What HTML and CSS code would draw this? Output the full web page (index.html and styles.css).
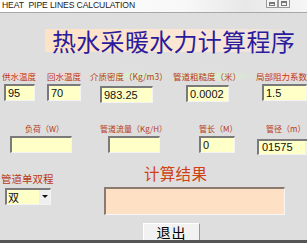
FILE: index.html
```html
<!DOCTYPE html>
<html>
<head>
<meta charset="utf-8">
<link rel="stylesheet" href="styles.css">
</head>
<body>
<div class="win">
  <div class="titlebar">
    <span class="tb-text">HEAT&nbsp; PIPE LINES CALCULATION</span>
    <span class="tb-btns"><span class="tb-btn"><span class="ic-min"></span></span><span class="tb-btn"><span class="ic-max"></span></span></span>
  </div>
  <div class="client">
    <div class="heading"><span class="heading-text">热水采暖水力计算程序</span></div>

    <div class="row row1">
      <div class="fld f11"><div class="lbl lp">供水温度</div><div class="inp">95</div></div>
      <div class="fld f12"><div class="lbl lp">回水温度</div><div class="inp">70</div></div>
      <div class="fld f13"><div class="lbl lg">介质密度（Kg/m3）</div><div class="inp">983.25</div></div>
      <div class="fld f14"><div class="lbl lg">管道粗糙度（米）</div><div class="inp">0.0002</div></div>
      <div class="fld f15"><div class="lbl lp">局部阻力系数</div><div class="inp">1.5</div></div>
    </div>

    <div class="row row2">
      <div class="fld f21"><div class="lbl">负荷（W）</div><div class="inp"></div></div>
      <div class="fld f22"><div class="lbl">管道流量（Kg/H）</div><div class="inp"></div></div>
      <div class="fld f23"><div class="lbl">管长（M）</div><div class="inp">0</div></div>
      <div class="fld f24"><div class="lbl">管径（m）</div><div class="sel wide"><span class="sel-v">01575</span><span class="arrow"></span></div></div>
    </div>

    <div class="row row3">
      <div class="col-left">
        <div class="lbl big">管道单双程</div>
        <div class="sel small"><span class="sel-v">双</span><span class="arrow"></span></div>
      </div>
      <div class="col-right">
        <div class="result-title">计算结果</div>
        <div class="result"></div>
      </div>
    </div>

    <div class="btnrow"><div class="btn">退出</div></div>
  </div>
</div>
</body>
</html>
```

FILE: styles.css
```css
* { box-sizing: border-box; }
html, body { margin: 0; padding: 0; }
body {
  width: 307px;
  height: 243px;
  overflow: hidden;
  background: #dedede;
  font-family: "Noto Sans CJK SC", "Liberation Sans", sans-serif;
}
.win { width: 307px; height: 243px; display: flex; flex-direction: column; }
.titlebar {
  height: 15px;
  background: linear-gradient(to right, #ffffff 0%, #f8f8f8 60%, #e8e8e8 80%, #f6f6f6 100%);
  border-bottom: 1px solid #a8a8a8;
  display: flex;
  align-items: flex-start;
  justify-content: space-between;
  padding-left: 2px;
}
.tb-text {
  font-family: "Liberation Sans", Arial, sans-serif;
  font-size: 8.6px;
  line-height: 10px;
  color: #222;
  letter-spacing: -0.1px;
}
.tb-btns { display: flex; margin-right: 17px; }
.tb-btn {
  width: 12px; height: 8px;
  border: 1px solid #9a9a9a;
  border-top: none;
  background: #f4f4f4;
  display: flex;
  align-items: center;
  justify-content: center;
}
.ic-min { width: 6px; height: 4px; border: 1px solid #777; border-top-width: 2px; }
.ic-max { width: 6px; height: 5px; border: 1px solid #777; border-top-width: 2px; }
.client {
  flex: 1;
  border-bottom: 3px solid #555;
  display: flex;
  flex-direction: column;
}
.heading {
  margin: 16px 0 0 45px;
  width: 246px;
  height: 23px;
  background: linear-gradient(to right, #fde3c6 0%, #fbe6d2 50%, #f2e4dc 85%, #dedede 100%);
  display: flex;
  align-items: center;
}
.heading-text {
  font-size: 24px;
  line-height: 23px;
  color: #2a1c9c;
  letter-spacing: 0.3px;
  margin-left: 7px;
  white-space: nowrap;
}
.row { display: flex; align-items: flex-start; }
.row1 { margin-top: 19px; }
.fld { display: flex; flex-direction: column; }
.lbl {
  font-size: 8.5px;
  line-height: 10px;
  color: #b83a14;
  white-space: nowrap;
}
.lp { background: radial-gradient(ellipse at center, #fcd3cf 0%, rgba(222,222,222,0) 75%); }
.lg { background: radial-gradient(ellipse at center, #d8f0cc 0%, rgba(222,222,222,0) 75%); }
.inp {
  height: 17px;
  background: #ffffc8;
  border-top: 2px solid #7a7a7a;
  border-left: 2px solid #7a7a7a;
  border-right: 1px solid #f4f4f4;
  border-bottom: 1px solid #f4f4f4;
  font-family: "Liberation Sans", Arial, sans-serif;
  font-size: 11px;
  line-height: 14px;
  padding-left: 2px;
  color: #111;
}
.f11 { margin-left: 2px; width: 40px; }
.f11 .inp { margin: 3px 0 0 2px; width: 31px; }
.f12 { margin-left: 5px; width: 40px; }
.f12 .inp { margin: 3px 0 0 0; width: 34px; }
.f13 { margin-left: 3px; width: 80px; }
.f13 .inp { margin: 5px 0 0 10px; width: 53px; }
.f14 { margin-left: 3px; width: 83px; }
.f14 .inp { margin: 4px 0 0 13px; width: 43px; }
.f15 { margin-left: 0px; width: 51px; }
.f15 .inp { margin: 3px 0 0 6px; width: 45px; }

.row2 { margin-top: 21px; }
.row2 .lbl { font-size: 8px; }
.f21 { margin-left: 10px; width: 90px; }
.f21 .lbl { margin-left: 15px; }
.f21 .inp { margin-top: 2px; width: 62px; }
.f22 { margin-left: 0; width: 99px; }
.f22 .inp { margin: 2px 0 0 8px; width: 52px; }
.f23 { width: 58px; }
.f23 .inp { margin-top: 2px; width: 36px; padding-top: 0; }
.f23 .lbl { margin-left: 0; }
.f24 { width: 50px; }
.f24 .lbl { margin-left: 9px; }

.sel {
  display: flex;
  background: #ffffff;
  border-top: 2px solid #7a7a7a;
  border-left: 2px solid #7a7a7a;
  border-right: 1px solid #f4f4f4;
  border-bottom: 1px solid #f4f4f4;
}
.sel-v {
  flex: 1;
  background: #ffffc8;
  font-family: "Liberation Sans", Arial, sans-serif;
  font-size: 11px;
  line-height: 13px;
  padding-left: 3px;
  color: #111;
}
.arrow {
  width: 11px;
  background: #efefef;
  position: relative;
}
.arrow::after {
  content: "";
  position: absolute;
  left: 3px; top: 5px;
  border-left: 3px solid transparent;
  border-right: 3px solid transparent;
  border-top: 3px solid #111;
}
.sel.wide { margin-top: 5px; width: 60px; height: 16px; }
.sel.small { margin: 3px 0 0 4px; width: 46px; height: 17px; }
.sel.small .sel-v { font-family: "Noto Sans CJK SC", sans-serif; line-height: 14px; padding-left: 1px; }

.row3 { margin-top: 9px; }
.col-left { width: 104px; padding-top: 9px; padding-left: 1px; }
.lbl.big { font-size: 10.5px; line-height: 12px; }
.col-right { display: flex; flex-direction: column; }
.result-title {
  margin-left: 40px;
  font-size: 15.5px;
  line-height: 18px;
  color: #d04010;
  letter-spacing: 0.3px;
}
.result {
  margin-top: 5px;
  width: 181px;
  height: 28px;
  background: #fee0c4;
  border-top: 2px solid #8a7a70;
  border-left: 2px solid #8a7a70;
  border-right: 1px solid #f6f6f6;
  border-bottom: 1px solid #f6f6f6;
}
.btnrow { margin-top: 8px; padding-left: 143px; }
.btn {
  width: 57px;
  height: 17px;
  background: #f2f2f2;
  border-top: 1px solid #ffffff;
  border-left: 1px solid #ffffff;
  border-right: 1px solid #9a9a9a;
  font-size: 14px;
  line-height: 17px;
  text-align: center;
  color: #000;
  letter-spacing: 1px;
}
```
